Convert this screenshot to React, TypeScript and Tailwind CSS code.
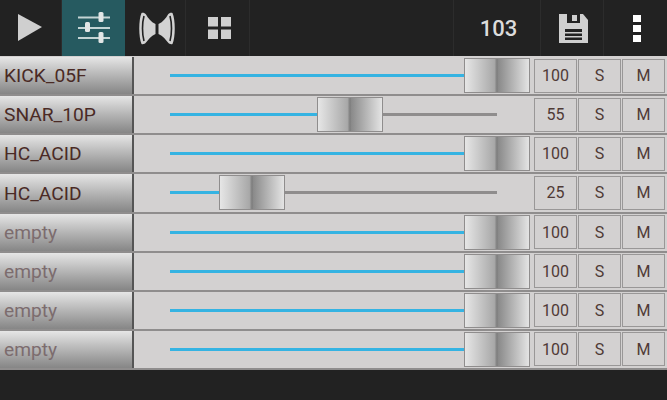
const channels = [
  { name: "KICK_05F", level: 100 },
  { name: "SNAR_10P", level: 55 },
  { name: "HC_ACID", level: 100 },
  { name: "HC_ACID", level: 25 },
  { name: "empty", level: 100 },
  { name: "empty", level: 100 },
  { name: "empty", level: 100 },
  { name: "empty", level: 100 },
];

function PlayIcon() {
  return (
    <svg width="26" height="30" viewBox="0 0 26 30">
      <path d="M1 1 L25 14 L1 28 Z" fill="#cfcfcf" />
    </svg>
  );
}

function MixerIcon() {
  return (
    <svg width="32" height="32" viewBox="0 0 32 32">
      <rect x="0" y="4.5" width="32" height="2" fill="#c4d4d4" />
      <rect x="0" y="15" width="32" height="2" fill="#c4d4d4" />
      <rect x="0" y="25" width="32" height="2" fill="#c4d4d4" />
      <rect x="20.5" y="0" width="5" height="10" rx="1.5" fill="#e2e6e6" />
      <rect x="7" y="10" width="5" height="10" rx="1.5" fill="#e2e6e6" />
      <rect x="20.5" y="20" width="5" height="11" rx="1.5" fill="#e2e6e6" />
    </svg>
  );
}

function PanBlade() {
  return (
    <>
      <path
        d="M2.5 1 C4 0.5 6 1 7 2.5 C9 6 12 10 16.5 12 V22 C12 24 9 28 7 30.5 C6 32 4 32.5 2.5 32 C-0.5 25 -0.5 8 2.5 1 Z"
        fill="#d2d2d2"
      />
      <path d="M5 4 C3 11 3 22 5 29" fill="none" stroke="#222222" strokeWidth="1.6" />
    </>
  );
}

function PanIcon() {
  return (
    <svg width="36" height="33" viewBox="0 0 36 33">
      <PanBlade />
      <g transform="translate(36,0) scale(-1,1)">
        <PanBlade />
      </g>
    </svg>
  );
}

function GridIcon() {
  return (
    <svg width="23" height="22" viewBox="0 0 23 22" fill="#cfcfcf">
      <rect x="0" y="0" width="10" height="9.5" />
      <rect x="13" y="0" width="10" height="9.5" />
      <rect x="0" y="12.5" width="10" height="9.5" />
      <rect x="13" y="12.5" width="10" height="9.5" />
    </svg>
  );
}

function SaveIcon() {
  return (
    <svg width="29" height="29" viewBox="0 0 29 29">
      <path d="M0 0 H24 L29 6 V29 H0 Z" fill="#cfcfcf" />
      <rect x="8" y="0" width="13" height="9" fill="#222222" />
      <rect x="13" y="1" width="5" height="6" fill="#cfcfcf" />
      <rect x="6" y="15" width="17" height="11" fill="#222222" />
      <rect x="6" y="18" width="17" height="1.5" fill="#cfcfcf" />
      <rect x="6" y="22" width="17" height="1.5" fill="#cfcfcf" />
    </svg>
  );
}

function Toolbar() {
  return (
    <div className="flex h-[56px] bg-[#222222] text-[#dcdcdc]">
      <div className="flex w-[62px] items-center justify-center border-r border-[#2c2c2c] pb-[1px] pr-[1px]">
        <PlayIcon />
      </div>
      <div className="flex w-[63px] items-center justify-center bg-[#265a60]">
        <MixerIcon />
      </div>
      <div className="flex w-[61px] items-center justify-center border-r border-[#2c2c2c] pl-[4px]">
        <PanIcon />
      </div>
      <div className="flex w-[64px] items-center justify-center border-r border-[#2c2c2c] pl-[3px]">
        <GridIcon />
      </div>
      <div className="flex-1 border-r border-[#2c2c2c]" />
      <div className="flex w-[87px] items-center justify-center border-r border-[#2c2c2c] pl-[3px] text-[22px] font-medium">
        103
      </div>
      <div className="flex w-[63px] items-center justify-center border-r border-[#2c2c2c] pl-[2px]">
        <SaveIcon />
      </div>
      <div className="flex w-[63px] flex-col items-center justify-center gap-[3px] pl-[2px]">
        <div className="h-[7px] w-[8px] bg-white" />
        <div className="h-[7px] w-[8px] bg-white" />
        <div className="h-[7px] w-[8px] bg-white" />
      </div>
    </div>
  );
}

function SmallButton({ label }: { label: string }) {
  return (
    <div className="flex h-[34px] w-[43px] items-center justify-center border border-[#999797] bg-[#d3d1d1] pt-[1px] text-[16px] text-[#4f3a36]">
      {label}
    </div>
  );
}

function ChannelRow({ name, level }: { name: string; level: number }) {
  const isEmpty = name === "empty";
  return (
    <div className="flex min-h-0 border-b-2 border-[#8f8d8d] bg-[#d3d1d1]">
      <div className="flex w-[132px] items-center bg-gradient-to-b from-[#e6e6e6] to-[#868686] pl-[4px] pt-[2px]">
        <span className={`text-[19.2px] ${isEmpty ? "text-[#7c6c6e]" : "text-[#4a2a25]"}`}>{name}</span>
      </div>
      <div className="w-[2px] bg-[#555555]" />
      <div className="relative flex flex-1 items-center pl-[36px] pr-[170px]">
        <div className="relative h-[3px] w-full bg-[#8f8d8d]">
          <div className="h-full bg-[#35b3e2]" style={{ width: `${level}%` }} />
          <div
            className="absolute top-[-16px] h-[35px] w-[66px] -translate-x-1/2 border border-[#8f8d8d] bg-[linear-gradient(90deg,#e6e6e6_0%,#a8a8a8_46%,#7c7c7c_50%,#8a8a8a_52%,#e4e4e4_100%)]"
            style={{ left: `${level}%` }}
          />
        </div>
        <div className="absolute right-[2px] flex gap-[1px]">
          <SmallButton label={String(level)} />
          <SmallButton label="S" />
          <SmallButton label="M" />
        </div>
      </div>
    </div>
  );
}

export default function App() {
  return (
    <div className="flex h-[400px] w-[667px] flex-col overflow-hidden bg-[#222222] font-['Roboto',sans-serif]">
      <Toolbar />
      <div className="h-[314px] bg-[#d3d1d1] pt-[1px]">
        <div className="grid h-full grid-rows-8">
          {channels.map((channel, index) => (
            <ChannelRow key={index} name={channel.name} level={channel.level} />
          ))}
        </div>
      </div>
    </div>
  );
}
